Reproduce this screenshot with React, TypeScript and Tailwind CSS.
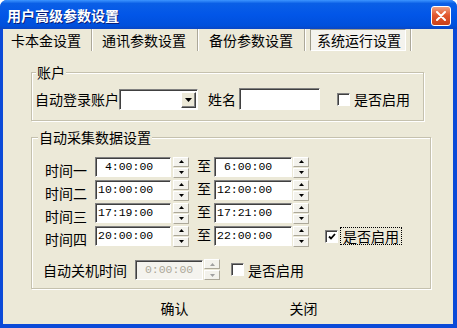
import React from "react";

const cjk = { fontFamily: '"Noto Sans CJK SC", "Noto Sans", sans-serif' };
const mono = { fontFamily: '"Liberation Mono", "DejaVu Sans Mono", monospace' };

function Spin({ disabled = false }: { disabled?: boolean }) {
  const arrow = disabled ? "#a0a0a0" : "#000";
  return (
    <div className="flex flex-col w-[16px] h-[21px] gap-[1px]">
      <div className="flex-1 flex items-center justify-center bg-[#f3f2ec] border border-t-white border-l-white border-b-[#aca899] border-r-[#aca899]">
        <svg width="5" height="3" viewBox="0 0 5 3">
          <path d="M2.5 0 L5 3 L0 3 Z" fill={arrow} />
        </svg>
      </div>
      <div className="flex-1 flex items-center justify-center bg-[#f3f2ec] border border-t-white border-l-white border-b-[#aca899] border-r-[#aca899]">
        <svg width="5" height="3" viewBox="0 0 5 3">
          <path d="M0 0 L5 0 L2.5 3 Z" fill={arrow} />
        </svg>
      </div>
    </div>
  );
}

function TimeBox({ value, width, disabled = false }: { value: string; width: string; disabled?: boolean }) {
  return (
    <div
      className={`${width} h-[20px] flex items-center pl-[2px] border border-t-[#808080] border-l-[#808080] border-b-white border-r-white shadow-[inset_1px_1px_0_#404040] whitespace-pre text-[11.5px] ${
        disabled ? "bg-[#f4f3ee] text-[#aca899]" : "bg-white text-black"
      }`}
      style={mono}
    >
      {value}
    </div>
  );
}

function CheckBox({ checked = false }: { checked?: boolean }) {
  return (
    <div className="w-[13px] h-[13px] bg-white border border-t-[#808080] border-l-[#808080] border-b-white border-r-white shadow-[inset_1px_1px_0_#404040] flex items-center justify-center">
      {checked && (
        <svg width="8" height="7" viewBox="0 0 8 7">
          <path d="M1 3.5 L3 5.5 L7 1" stroke="#000" strokeWidth="1.8" fill="none" />
        </svg>
      )}
    </div>
  );
}

const rows = [
  { label: "时间一", from: " 4:00:00", to: " 6:00:00", check: false },
  { label: "时间二", from: "10:00:00", to: "12:00:00", check: false },
  { label: "时间三", from: "17:19:00", to: "17:21:00", check: false },
  { label: "时间四", from: "20:00:00", to: "22:00:00", check: true },
];

export default function App() {
  return (
    <div className="w-[457px] h-[328px] bg-white">
      <div className="w-[457px] h-[328px] flex flex-col bg-[#0b4ad8] rounded-t-[7px] overflow-hidden text-[14px] text-black" style={cjk}>
        {/* Title bar */}
        <div className="h-[29px] shrink-0 flex items-center justify-between pl-[7px] pr-[6px] bg-[linear-gradient(180deg,#3d95ff_0%,#0a5fe6_12%,#0256e8_50%,#0050dc_88%,#0a46c4_100%)]">
          <span className="text-white font-bold text-[14px] leading-none [text-shadow:1px_1px_0_#0a1f7a]">
            用户高级参数设置
          </span>
          <div className="w-[20px] h-[20px] mt-[2px] rounded-[3px] border border-white bg-[linear-gradient(180deg,#f0a080_0%,#e2582f_45%,#c8401a_100%)] flex items-center justify-center">
            <svg width="10" height="10" viewBox="0 0 10 10">
              <path d="M1 1 L9 9 M9 1 L1 9" stroke="#fff" strokeWidth="2" strokeLinecap="round" />
            </svg>
          </div>
        </div>

        {/* Client area */}
        <div className="flex-1 ml-[3px] mr-[4px] mb-[4px] bg-[#ece9d8] flex flex-col">
          {/* Tabs */}
          <div className="h-[22px] flex items-stretch leading-none">
            <div className="w-[89px] pl-[8px] flex items-center border-r border-r-[#aca899] shadow-[1px_0_0_#fff]">卡本金设置</div>
            <div className="w-[105px] pl-[9px] ml-[1px] flex items-center border-r border-r-[#aca899] shadow-[1px_0_0_#fff]">通讯参数设置</div>
            <div className="w-[106px] pl-[10px] ml-[1px] flex items-center border-r border-r-[#aca899] shadow-[1px_0_0_#fff]">备份参数设置</div>
            <div className="ml-[5px] w-[96px] pl-[6px] flex items-center bg-[#f4f3ee] border border-t-[#9d9a8a] border-l-[#9d9a8a] border-b-white border-r-white">系统运行设置</div>
            <div className="ml-[4px] border-r border-r-[#aca899] shadow-[1px_0_0_#fff]" />
          </div>

          {/* 账户 */}
          <div className="relative ml-[28px] mt-[21px] w-[393px] h-[49px] border border-[#c5c1ae] shadow-[inset_1px_1px_0_#fff,1px_1px_0_#fff] pt-[15px] pl-[3px]">
            <span className="absolute -top-[9px] left-[4px] px-[1px] bg-[#ece9d8] leading-[16px]">账户</span>
            <div className="flex items-center h-[22px] leading-none">
              <span>自动登录账户</span>
              <div className="w-[79px] h-[21px] ml-[0px] bg-white border border-t-[#808080] border-l-[#808080] border-b-white border-r-white shadow-[inset_1px_1px_0_#404040] flex justify-end items-center pr-[1px]">
                <div className="w-[15px] h-[16px] mt-[1px] bg-[#ece9d8] border border-t-white border-l-white border-b-[#404040] border-r-[#404040] shadow-[inset_-1px_-1px_0_#808080] flex items-center justify-center">
                  <svg width="7" height="4" viewBox="0 0 7 4">
                    <path d="M0 0 L7 0 L3.5 4 Z" fill="#000" />
                  </svg>
                </div>
              </div>
              <span className="ml-[10px]">姓名</span>
              <div className="ml-[3px] w-[81px] h-[22px] bg-white border border-t-[#808080] border-l-[#808080] border-b-white border-r-white shadow-[inset_1px_1px_0_#404040]" />
              <div className="ml-[17px]">
                <CheckBox />
              </div>
              <span className="ml-[4px]">是否启用</span>
            </div>
          </div>

          {/* 自动采集数据设置 */}
          <div className="relative ml-[28px] mt-[16px] w-[400px] h-[152px] border border-[#c5c1ae] shadow-[inset_1px_1px_0_#fff,1px_1px_0_#fff] pt-[19px] leading-none">
            <span className="absolute -top-[9px] left-[6px] px-[1px] bg-[#ece9d8] leading-[16px]">自动采集数据设置</span>
            <div className="flex flex-col gap-[3px] pl-[13px]">
              {rows.map((r) => (
                <div key={r.label} className="flex items-center h-[20px]">
                  <span className="w-[42px] pt-[5px]">{r.label}</span>
                  <div className="ml-[8px]">
                    <TimeBox value={r.from} width="w-[76px]" />
                  </div>
                  <div className="ml-[2px]">
                    <Spin />
                  </div>
                  <span className="ml-[8px] pb-[4px]">至</span>
                  <div className="ml-[3px]">
                    <TimeBox value={r.to} width="w-[78px]" />
                  </div>
                  <div className="ml-[1px]">
                    <Spin />
                  </div>
                  {r.check && (
                    <>
                      <div className="ml-[16px]">
                        <CheckBox checked />
                      </div>
                      <span className="ml-[2px] px-[2px] py-[1px] border border-dotted border-black">是否启用</span>
                    </>
                  )}
                </div>
              ))}
            </div>
            <div className="flex items-center h-[21px] mt-[13px] pl-[11px]">
              <span>自动关机时间</span>
              <div className="ml-[8px]">
                <TimeBox value=" 0:00:00" width="w-[68px]" disabled />
              </div>
              <div className="ml-[1px]">
                <Spin disabled />
              </div>
              <div className="ml-[11px]">
                <CheckBox />
              </div>
              <span className="ml-[4px]">是否启用</span>
            </div>
          </div>

          {/* Buttons */}
          <div className="flex mt-[7px] ml-[134px] gap-[54px] leading-none">
            <button className="w-[75px] h-[23px] flex items-center justify-center">确认</button>
            <button className="w-[75px] h-[23px] flex items-center justify-center">关闭</button>
          </div>
        </div>
      </div>
    </div>
  );
}
